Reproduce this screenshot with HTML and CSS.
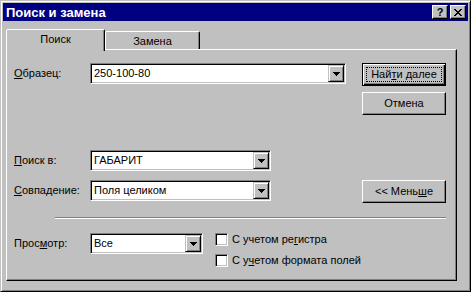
FILE: index.html
```html
<!DOCTYPE html>
<html lang="ru">
<head>
<meta charset="utf-8">
<title>Поиск и замена</title>
<link rel="stylesheet" href="styles.css">
</head>
<body>
<div class="window">
  <div class="titlebar">
    <span class="title">Поиск и замена</span>
    <span class="tbtn help">?</span>
    <span class="tbtn close">
      <svg width="8" height="7" viewBox="0 0 8 7" shape-rendering="crispEdges"><path d="M0 0h2v1H0zM6 0h2v1H6zM1 1h2v1H1zM5 1h2v1H5zM2 2h4v1H2zM3 3h2v1H3zM2 4h4v1H2zM1 5h2v1H1zM5 5h2v1H5zM0 6h2v1H0zM6 6h2v1H6z" fill="#000"/></svg>
    </span>
  </div>
  <div class="client">
    <div class="tabs">
      <div class="tab active">Поиск</div>
      <div class="tab inactive">Замена</div>
    </div>
    <div class="panel">
      <div class="row r1">
        <span class="lbl"><u>О</u>бразец:</span>
        <div class="combo w-long"><span class="val">250-100-80</span><span class="drop"><svg width="7" height="4" viewBox="0 0 7 4" shape-rendering="crispEdges"><path d="M0 0h7v1H0zM1 1h5v1H1zM2 2h3v1H2zM3 3h1v1H3z" fill="#000"/></svg></span></div>
        <button class="btn default"><span class="focus">Най<u>т</u>и далее</span></button>
      </div>
      <div class="row r2">
        <button class="btn">Отмена</button>
      </div>
      <div class="row r3">
        <span class="lbl"><u>П</u>оиск в:</span>
        <div class="combo w-mid"><span class="val">ГАБАРИТ</span><span class="drop"><svg width="7" height="4" viewBox="0 0 7 4" shape-rendering="crispEdges"><path d="M0 0h7v1H0zM1 1h5v1H1zM2 2h3v1H2zM3 3h1v1H3z" fill="#000"/></svg></span></div>
      </div>
      <div class="row r4">
        <span class="lbl"><u>С</u>овпадение:</span>
        <div class="combo w-mid"><span class="val">Поля целиком</span><span class="drop"><svg width="7" height="4" viewBox="0 0 7 4" shape-rendering="crispEdges"><path d="M0 0h7v1H0zM1 1h5v1H1zM2 2h3v1H2zM3 3h1v1H3z" fill="#000"/></svg></span></div>
        <button class="btn">&lt;&lt; Мень<u>ш</u>е</button>
      </div>
      <div class="sep"></div>
      <div class="row r5">
        <span class="lbl">Прос<u>м</u>отр:</span>
        <div class="combo w-short"><span class="val">Все</span><span class="drop"><svg width="7" height="4" viewBox="0 0 7 4" shape-rendering="crispEdges"><path d="M0 0h7v1H0zM1 1h5v1H1zM2 2h3v1H2zM3 3h1v1H3z" fill="#000"/></svg></span></div>
        <div class="checks">
          <div class="check"><span class="cb"></span><span class="ctext">С учетом ре<u>г</u>истра</span></div>
          <div class="check"><span class="cb"></span><span class="ctext">С у<u>ч</u>етом формата полей</span></div>
        </div>
      </div>
    </div>
  </div>
</div>
</body>
</html>
```

FILE: styles.css
```css
* { box-sizing: border-box; }

body {
  margin: 0;
  font-family: "Liberation Sans", Arial, sans-serif;
  font-size: 11px;
  line-height: 13px;
  color: #000;
  background: #c0c0c0;
}

.window {
  width: 471px;
  height: 292px;
  background: #c0c0c0;
  border: 1px solid;
  border-color: #c0c0c0 #000 #000 #c0c0c0;
  box-shadow: inset 1px 1px #fff, inset -1px -1px #808080;
  padding: 2px;
  display: flex;
  flex-direction: column;
}

.titlebar {
  height: 18px;
  flex: none;
  background: #000080;
  color: #fff;
  display: flex;
  align-items: center;
  padding: 0 2px 0 3px;
  font-weight: bold;
  font-size: 13px;
}

.title { flex: 1; }

.tbtn {
  width: 16px;
  height: 14px;
  background: #c0c0c0;
  border: 1px solid;
  border-color: #fff #000 #000 #fff;
  box-shadow: inset -1px -1px #808080;
  display: flex;
  align-items: center;
  justify-content: center;
  color: #000;
  font-size: 11px;
  font-weight: bold;
}

.tbtn + .tbtn { margin-left: 2px; }

.client {
  flex: 1;
  padding: 8px 11px 0 3px;
  display: flex;
  flex-direction: column;
}

.tabs {
  display: flex;
  align-items: flex-start;
  height: 20px;
  flex: none;
}

.tab {
  border: 1px solid;
  border-bottom: none;
  border-color: #fff #000 transparent #fff;
  border-radius: 2px 2px 0 0;
  box-shadow: inset -1px 0 #808080;
  background: #c0c0c0;
  text-align: center;
  padding-top: 3px;
}

.tab.active {
  width: 99px;
  height: 22px;
  position: relative;
  z-index: 1;
}

.tab.inactive {
  width: 95px;
  height: 18px;
  margin-top: 2px;
}

.panel {
  height: 232px;
  flex: none;
  border: 1px solid;
  border-color: #fff #000 #000 #fff;
  box-shadow: inset -1px -1px #808080;
  padding: 13px 10px 0 7px;
  display: flex;
  flex-direction: column;
}

.row {
  display: flex;
  align-items: flex-start;
}

.lbl {
  width: 76px;
  flex: none;
  line-height: 21px;
  height: 21px;
}

.combo {
  height: 21px;
  flex: none;
  background: #fff;
  border: 1px solid;
  border-color: #808080 #fff #fff #808080;
  box-shadow: inset 1px 1px #000, inset -1px -1px #c0c0c0;
  padding: 1px 1px 1px 3px;
  display: flex;
  align-items: center;
}

.w-long { width: 256px; }
.w-mid { width: 181px; }
.w-short { width: 113px; }

.val { flex: 1; white-space: nowrap; }

.drop {
  width: 16px;
  height: 17px;
  background: #c0c0c0;
  border: 1px solid;
  border-color: #c0c0c0 #000 #000 #c0c0c0;
  box-shadow: inset 1px 1px #fff, inset -1px -1px #808080;
  display: flex;
  align-items: center;
  justify-content: center;
  padding-top: 1px;
}

.drop svg { display: block; }

.btn {
  width: 84px;
  height: 23px;
  flex: none;
  margin-left: auto;
  background: #c0c0c0;
  border: 1px solid;
  border-color: #fff #000 #000 #fff;
  box-shadow: inset -1px -1px #808080;
  font: inherit;
  color: #000;
  padding: 0;
  display: flex;
  align-items: center;
  justify-content: center;
}

.btn.default {
  border-color: #000;
  box-shadow: inset 1px 1px #fff, inset -1px -1px #000, inset -2px -2px #808080;
  padding: 3px;
}

.focus {
  display: flex;
  align-items: center;
  justify-content: center;
  width: 100%;
  height: 100%;
  border: 1px dotted #000;
}

.r2 { margin-top: 6px; }
.r3 { margin-top: 35px; }
.r4 { margin-top: 9px; }

.sep {
  height: 2px;
  margin: 14px 0 0 41px;
  border-top: 1px solid #808080;
  border-bottom: 1px solid #fff;
  flex: none;
}

.r5 { margin-top: 14px; }

.checks {
  margin-left: 12px;
  display: flex;
  flex-direction: column;
}

.check {
  height: 21px;
  display: flex;
  align-items: flex-start;
}

.cb {
  width: 13px;
  height: 13px;
  flex: none;
  background: #fff;
  border: 1px solid;
  border-color: #808080 #fff #fff #808080;
  box-shadow: inset 1px 1px #000, inset -1px -1px #c0c0c0;
}

.ctext {
  margin-left: 4px;
  white-space: nowrap;
}
```
